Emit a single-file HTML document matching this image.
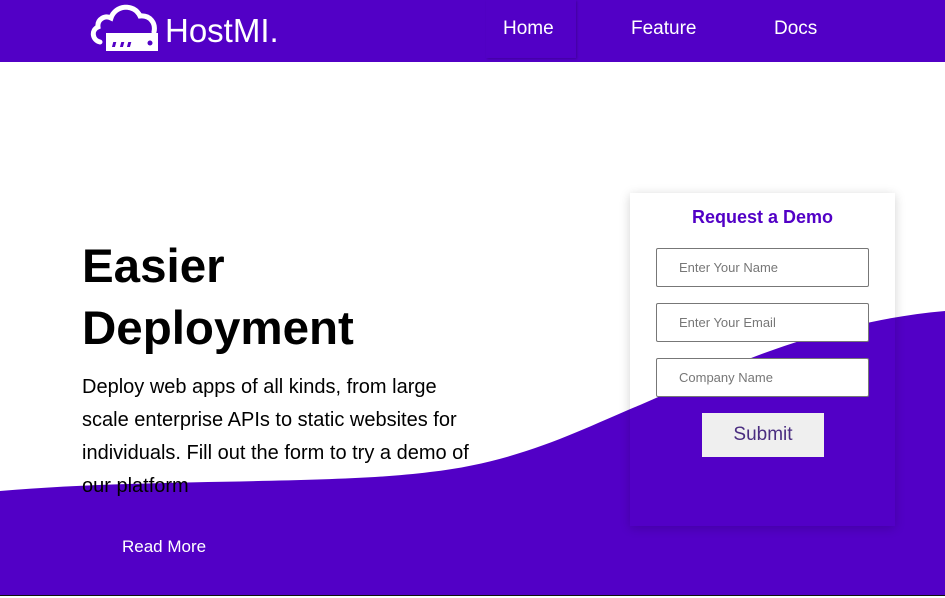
<!DOCTYPE html>
<html><head><style>
*{margin:0;padding:0;box-sizing:border-box}
body{width:945px;height:598px;overflow:hidden;background:#fff;font-family:"Liberation Sans",Arial,sans-serif;position:relative}
.nav{position:absolute;left:0;top:0;width:945px;height:62px;background:#5200c6}
.logo{position:absolute;left:90px;top:2px}
.brand{position:absolute;left:165px;top:12px;color:#fff;font-size:33px;font-family:"Liberation Sans",sans-serif;letter-spacing:0}
.nl{position:absolute;top:18px;color:#fff;font-size:19px}
.home{position:absolute;left:486px;top:0;width:90px;height:58px;box-shadow:1px 1px 2px rgba(0,0,0,.2)}
h1{position:absolute;left:82px;top:236px;font-size:47.5px;line-height:62px;font-weight:bold;color:#000}
.p{position:absolute;left:82px;top:371px;width:400px;font-size:20px;line-height:33px;color:#000}
.rm{position:absolute;left:122px;top:537px;color:#fff;font-size:17px}
.card{position:absolute;left:630px;top:193px;width:265px;height:333px;box-shadow:0 2px 10px rgba(0,0,0,.18)}
.card h2{position:absolute;left:0;width:265px;top:14px;text-align:center;color:#5200c6;font-size:18px;font-weight:bold}
.in{position:absolute;left:26px;width:213px;height:39px;border:1px solid #777;border-radius:2px;background:#fff;color:#777;font-size:13px;padding:11px 0 0 22px}
.btn{position:absolute;left:72px;top:220px;width:122px;height:44px;background:#efefef;color:#4a2d80;font-size:19px;text-align:center;line-height:44px}
</style></head><body>
<svg style="position:absolute;left:0;top:0" width="945" height="598"><path d="M0 491 C150 478 330 485 430 472 C520 462 580 430 640 405 C720 370 820 322 945 311 L945 596 L0 596 Z" fill="#5200c6"/><rect x="0" y="595" width="945" height="1" fill="#111"/></svg>
<div class="nav">
<svg class="logo" width="72" height="52" viewBox="0 0 72 52"><path d="M10 40 C2 38 1 28 8 25 C7 17 15 13 21 16 C25 3 44 1 50 14 C60 13 66 21 64 30" fill="none" stroke="#fff" stroke-width="5" stroke-linecap="round"/><rect x="16" y="31" width="52" height="18" fill="#fff"/><g fill="#5200c6"><rect x="24" y="40" width="3" height="5" transform="skewX(-15) translate(10 0)"/><rect x="32" y="40" width="3" height="5" transform="skewX(-15) translate(10 0)"/><rect x="39" y="40" width="3" height="5" transform="skewX(-15) translate(10 0)"/><circle cx="60" cy="41" r="2.5"/></g></svg>
<div class="brand">HostMI.</div>
<div class="home"></div>
<div class="nl" style="left:503px">Home</div>
<div class="nl" style="left:631px">Feature</div>
<div class="nl" style="left:774px">Docs</div>
</div>
<h1>Easier<br>Deployment</h1>
<div class="p">Deploy web apps of all kinds, from large scale enterprise APIs to static websites for individuals. Fill out the form to try a demo of our platform</div>
<div class="rm">Read More</div>
<div class="card">
<h2>Request a Demo</h2>
<div class="in" style="top:55px">Enter Your Name</div>
<div class="in" style="top:110px">Enter Your Email</div>
<div class="in" style="top:165px">Company Name</div>
<div class="btn">Submit</div>
</div>
</body></html>
